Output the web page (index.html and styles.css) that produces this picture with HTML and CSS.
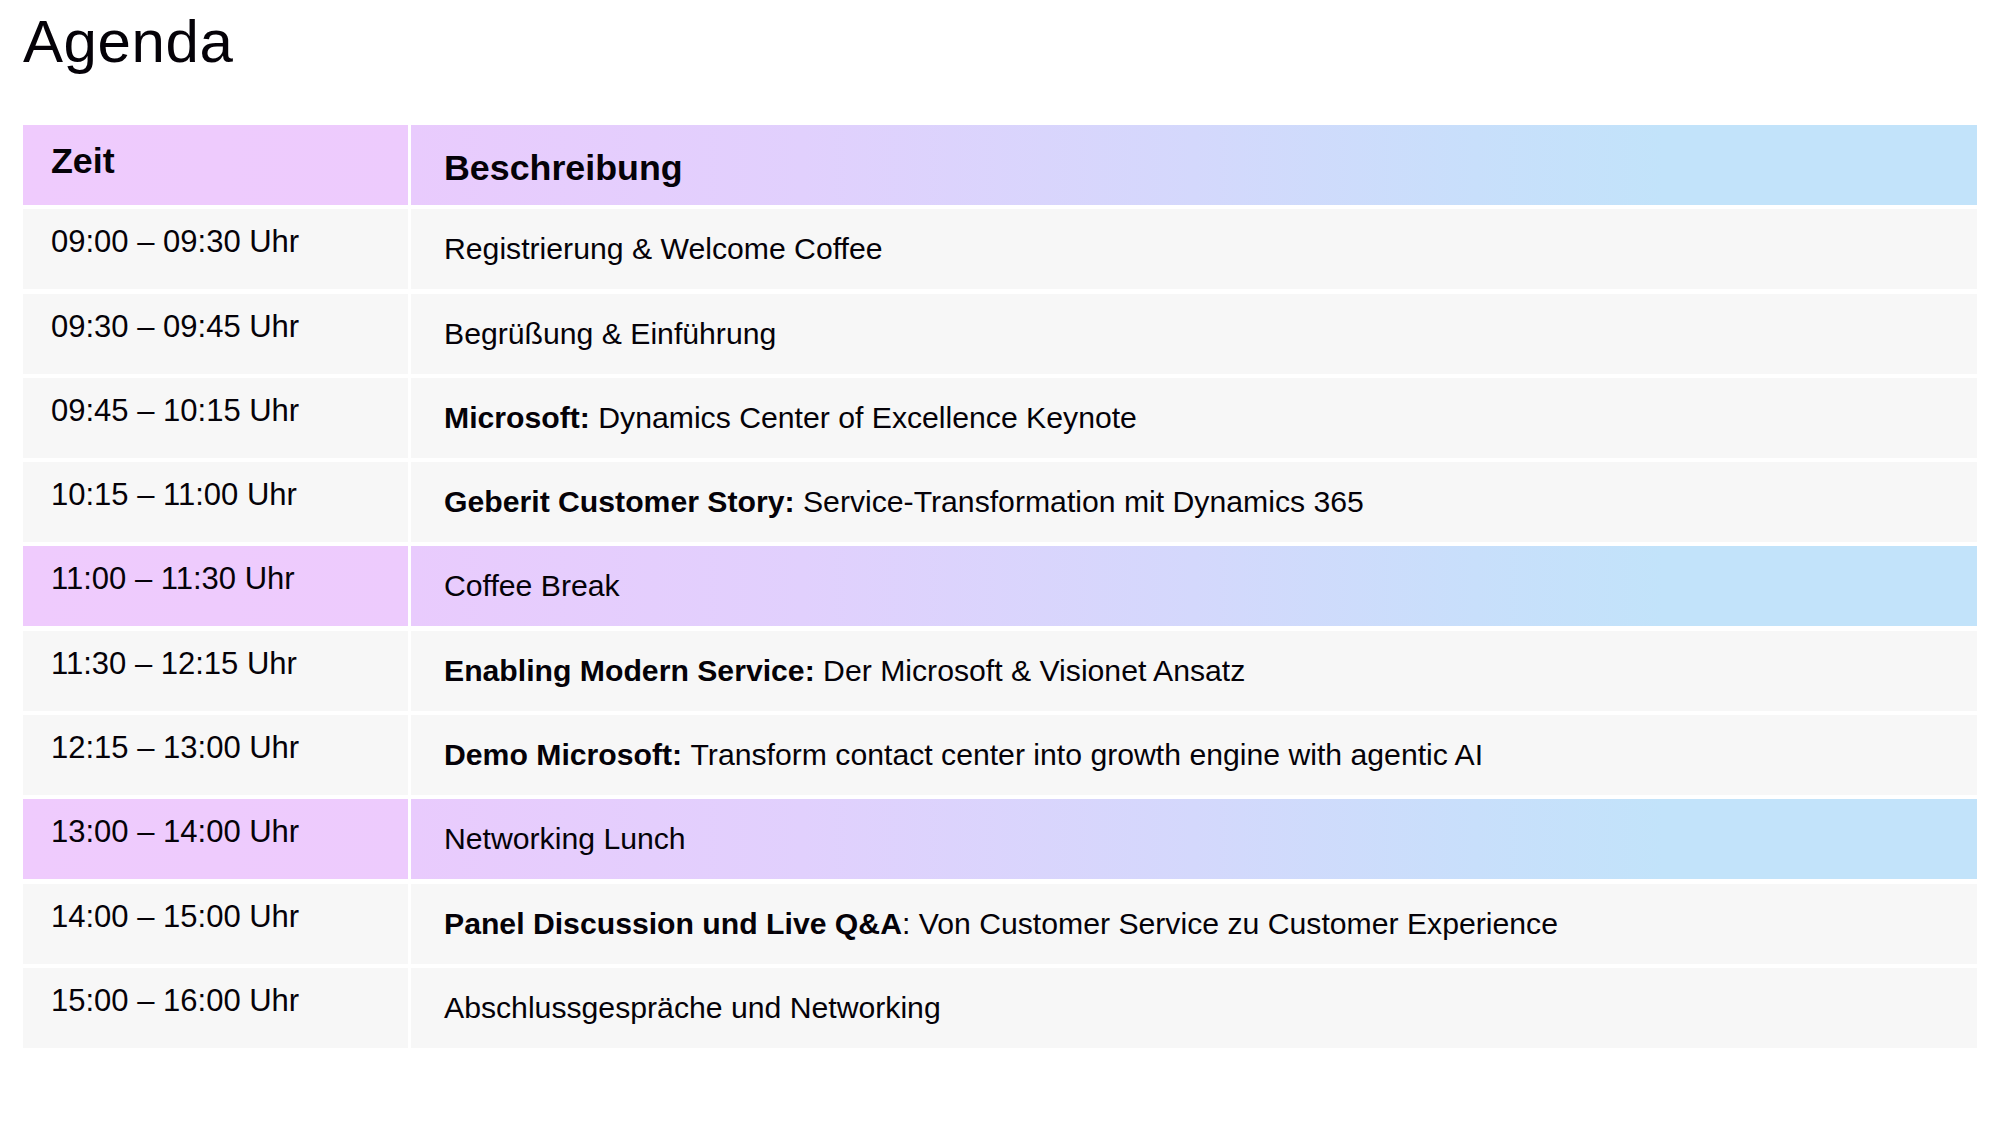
FILE: index.html
```html
<!DOCTYPE html>
<html lang="de">
<head>
<meta charset="utf-8">
<title>Agenda</title>
<link rel="stylesheet" href="styles.css">
</head>
<body>
<main class="page">
  <h1 class="title">Agenda</h1>
  <div class="agenda">
    <div class="cell time head">Zeit</div>
    <div class="cell desc head">Beschreibung</div>

    <div class="cell time">09:00 – 09:30 Uhr</div>
    <div class="cell desc">Registrierung &amp; Welcome Coffee</div>

    <div class="cell time">09:30 – 09:45 Uhr</div>
    <div class="cell desc">Begrüßung &amp; Einführung</div>

    <div class="cell time">09:45 – 10:15 Uhr</div>
    <div class="cell desc"><b>Microsoft:</b>&nbsp;Dynamics Center of Excellence Keynote</div>

    <div class="cell time">10:15 – 11:00 Uhr</div>
    <div class="cell desc"><b>Geberit Customer Story:</b>&nbsp;Service-Transformation mit Dynamics 365</div>

    <div class="cell time hl">11:00 – 11:30 Uhr</div>
    <div class="cell desc hl">Coffee Break</div>

    <div class="cell time">11:30 – 12:15 Uhr</div>
    <div class="cell desc"><b>Enabling Modern Service:</b>&nbsp;Der Microsoft &amp; Visionet Ansatz</div>

    <div class="cell time">12:15 – 13:00 Uhr</div>
    <div class="cell desc"><b>Demo Microsoft:</b>&nbsp;Transform contact center into growth engine with agentic AI</div>

    <div class="cell time hl">13:00 – 14:00 Uhr</div>
    <div class="cell desc hl">Networking Lunch</div>

    <div class="cell time">14:00 – 15:00 Uhr</div>
    <div class="cell desc"><b>Panel Discussion und Live Q&amp;A</b>: Von Customer Service zu Customer Experience</div>

    <div class="cell time">15:00 – 16:00 Uhr</div>
    <div class="cell desc">Abschlussgespräche und Networking</div>
  </div>
</main>
</body>
</html>
```
FILE: styles.css
```css
html, body {
  margin: 0;
  padding: 0;
  background: #ffffff;
}

body {
  font-family: "Liberation Sans", Arial, sans-serif;
  color: #050208;
}

.page {
  padding: 13px 23px 0 23px;
}

.title {
  margin: 0 0 54px 0;
  font-size: 60px;
  line-height: 58px;
  font-weight: 400;
  letter-spacing: 0.6px;
}

.agenda {
  display: grid;
  grid-template-columns: 385px 1fr;
  grid-auto-rows: 80px;
  column-gap: 3px;
  row-gap: 4.3px;
}

.cell {
  display: flex;
  align-items: center;
  background: #f7f7f7;
  font-size: 30.2px;
  line-height: 36px;
  white-space: nowrap;
}

.cell b {
  font-weight: 700;
}

.time {
  padding: 0 0 14px 28px;
  font-size: 31px;
}

.desc {
  padding: 0 0 0 33px;
}

.time.hl,
.time.head {
  background: linear-gradient(90deg, #efcbfd 0%, #edcbfd 100%);
}

.desc.hl,
.desc.head {
  background: linear-gradient(90deg, #e9cbfd 0%, #e1d0fd 25%, #d4d8fc 50%, #c8dffb 68%, #c2e3fa 80%, #c2e3fa 100%);
}

.head {
  font-weight: 700;
  font-size: 35.8px;
}

.time.head {
  padding: 0 0 8px 28px;
  font-size: 35.8px;
}

.desc.head {
  padding: 6px 0 0 33px;
}
```
